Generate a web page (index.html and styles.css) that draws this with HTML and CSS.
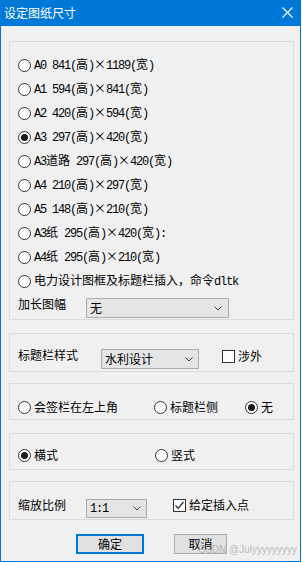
FILE: index.html
```html
<!DOCTYPE html>
<html lang="zh">
<head>
<meta charset="utf-8">
<title>设定图纸尺寸</title>
<link rel="stylesheet" href="styles.css">
</head>
<body>
<div class="win">
  <div class="titlebar">
    <span class="title">设定图纸尺寸</span>
    <svg class="close" width="11" height="11" viewBox="0 0 11 11"><path d="M0.5 0.5 L10.5 10.5 M10.5 0.5 L0.5 10.5" stroke="#fff" stroke-width="1.1" fill="none"/></svg>
  </div>
  <div class="content">
    <div class="group g1">
      <div class="row"><span class="rb"></span><span class="txt"><span class="l">A0 841(</span>高<span class="l">)</span><span class="x">×</span><span class="l">1189(</span>宽<span class="l">)</span></span></div>
      <div class="row"><span class="rb"></span><span class="txt"><span class="l">A1 594(</span>高<span class="l">)</span><span class="x">×</span><span class="l">841(</span>宽<span class="l">)</span></span></div>
      <div class="row"><span class="rb"></span><span class="txt"><span class="l">A2 420(</span>高<span class="l">)</span><span class="x">×</span><span class="l">594(</span>宽<span class="l">)</span></span></div>
      <div class="row"><span class="rb on"></span><span class="txt"><span class="l">A3 297(</span>高<span class="l">)</span><span class="x">×</span><span class="l">420(</span>宽<span class="l">)</span></span></div>
      <div class="row"><span class="rb"></span><span class="txt"><span class="l">A3</span>道路<span class="l"> 297(</span>高<span class="l">)</span><span class="x">×</span><span class="l">420(</span>宽<span class="l">)</span></span></div>
      <div class="row"><span class="rb"></span><span class="txt"><span class="l">A4 210(</span>高<span class="l">)</span><span class="x">×</span><span class="l">297(</span>宽<span class="l">)</span></span></div>
      <div class="row"><span class="rb"></span><span class="txt"><span class="l">A5 148(</span>高<span class="l">)</span><span class="x">×</span><span class="l">210(</span>宽<span class="l">)</span></span></div>
      <div class="row"><span class="rb"></span><span class="txt"><span class="l">A3</span>纸<span class="l"> 295(</span>高<span class="l">)</span><span class="x">×</span><span class="l">420(</span>宽<span class="l">):</span></span></div>
      <div class="row"><span class="rb"></span><span class="txt"><span class="l">A4</span>纸<span class="l"> 295(</span>高<span class="l">)</span><span class="x">×</span><span class="l">210(</span>宽<span class="l">)</span></span></div>
      <div class="row"><span class="rb"></span><span class="txt">电力设计图框及标题栏插入，命令<span class="l">dltk</span></span></div>
      <div class="lenrow">
        <span class="lbl w68">加长图幅</span>
        <div class="combo c-len"><span>无</span><svg class="chev" width="8" height="5" viewBox="0 0 8 5"><path d="M0.5 0.5 L4 4 L7.5 0.5" stroke="#444" fill="none"/></svg></div>
      </div>
    </div>

    <div class="group g2">
      <span class="lbl w83">标题栏样式</span>
      <div class="combo c-style"><span>水利设计</span><svg class="chev" width="8" height="5" viewBox="0 0 8 5"><path d="M0.5 0.5 L4 4 L7.5 0.5" stroke="#444" fill="none"/></svg></div>
      <div class="chk chk-shewai"><span class="cb"></span><span class="txt">涉外</span></div>
    </div>

    <div class="group g3">
      <div class="opt w136"><span class="rb"></span><span class="txt">会签栏在左上角</span></div>
      <div class="opt w91"><span class="rb"></span><span class="txt">标题栏侧</span></div>
      <div class="opt"><span class="rb on"></span><span class="txt">无</span></div>
    </div>

    <div class="group g4">
      <div class="opt w137"><span class="rb on"></span><span class="txt">横式</span></div>
      <div class="opt"><span class="rb"></span><span class="txt">竖式</span></div>
    </div>

    <div class="group g5">
      <span class="lbl w68">缩放比例</span>
      <div class="combo c-scale"><span class="l">1:1</span><svg class="chev" width="8" height="5" viewBox="0 0 8 5"><path d="M0.5 0.5 L4 4 L7.5 0.5" stroke="#444" fill="none"/></svg></div>
      <div class="chk chk-pt"><span class="cb"><svg width="11" height="11" viewBox="0 0 11 11"><path d="M1.5 5.5 L4.2 8.3 L9.5 2" stroke="#222" stroke-width="1.2" fill="none"/></svg></span><span class="txt">给定插入点</span></div>
    </div>

    <div class="buttons">
      <div class="btn ok">确定</div>
      <div class="btn cancel">取消</div>
    </div>
  </div>
  <div class="wm">CSDN @Julyyyyyyyyy</div>
</div>
</body>
</html>
```

FILE: styles.css
```css
html, body {
  margin: 0;
  padding: 0;
  background: #ffffff;
}
body {
  font-family: "Noto Sans CJK SC", "Noto Sans", sans-serif;
  font-size: 12px;
  color: #000;
}
.win {
  position: relative;
  width: 301px;
  height: 562px;
  box-sizing: border-box;
  border: 1px solid #0078d7;
  border-top: 0;
  background: #f0f0f0;
}
.titlebar {
  height: 26px;
  background: #0078d7;
  display: flex;
  align-items: center;
  justify-content: space-between;
  padding: 0 7px 0 3px;
  color: #fff;
}
.title {
  font-size: 12px;
  line-height: 16px;
  margin-top: -1px;
}
.close {
  display: block;
  margin-top: -1px;
}
.content {
  padding-left: 8px;
}
.group {
  width: 285px;
  box-sizing: border-box;
  border: 1px solid #dcdcdc;
  padding-left: 8px;
}
.g1 {
  margin-top: 15px;
  height: 279px;
  padding-top: 11px;
}
.row {
  height: 24px;
  display: flex;
  align-items: center;
}
.rb {
  width: 13px;
  height: 13px;
  box-sizing: border-box;
  border: 1px solid #333;
  border-radius: 50%;
  background: #fff;
  position: relative;
  flex: none;
}
.rb.on::after {
  content: "";
  position: absolute;
  left: 2px;
  top: 2px;
  width: 7px;
  height: 7px;
  border-radius: 50%;
  background: #1a1a1a;
}
.txt {
  margin-left: 3px;
  line-height: 16px;
  white-space: nowrap;
}
.l {
  font-family: "Liberation Mono", monospace;
  font-size: 12px;
  letter-spacing: -1.2px;
}
.x {
  display: inline-block;
  width: 12px;
  text-align: center;
}
.lenrow {
  display: flex;
  align-items: flex-start;
  margin-top: 3px;
}
.lbl {
  line-height: 16px;
  flex: none;
}
.w68 { width: 68px; }
.w83 { width: 83px; }
.w136 { width: 136px; }
.w91 { width: 91px; }
.w137 { width: 137px; }
.combo {
  box-sizing: border-box;
  border: 1px solid #adadad;
  background: #e5e5e5;
  display: flex;
  align-items: center;
  justify-content: space-between;
  padding: 0 5px 0 3px;
  line-height: 16px;
  flex: none;
}
.c-len {
  width: 143px;
  height: 20px;
  margin-top: 2px;
}
.c-len .chev { margin-right: 1px; }
.chev { display: block; }
.g2 {
  margin-top: 13px;
  height: 39px;
  padding-top: 13px;
  display: flex;
  align-items: flex-start;
}
.c-style {
  width: 98px;
  height: 20px;
  margin-top: 2px;
}
.chk {
  display: flex;
  align-items: center;
  height: 16px;
}
.cb {
  width: 13px;
  height: 13px;
  box-sizing: border-box;
  border: 1px solid #333;
  background: #fff;
  flex: none;
  display: flex;
  align-items: center;
  justify-content: center;
}
.cb svg { display: block; }
.chk-shewai {
  margin-left: 23px;
  margin-top: 1px;
}
.g3 {
  margin-top: 11px;
  height: 37px;
  padding-top: 15px;
  display: flex;
}
.opt {
  display: flex;
  align-items: center;
  height: 16px;
  flex: none;
}
.g4 {
  margin-top: 13px;
  height: 37px;
  padding-top: 13px;
  display: flex;
}
.g5 {
  margin-top: 11px;
  height: 39px;
  padding-top: 15px;
  display: flex;
  align-items: flex-start;
}
.c-scale {
  width: 61px;
  height: 19px;
  margin-top: 2px;
}
.chk-pt {
  margin-left: 26px;
}
.buttons {
  display: flex;
  margin-top: 14px;
  padding-left: 67px;
}
.btn {
  height: 20px;
  box-sizing: border-box;
  background: #e1e1e1;
  display: flex;
  align-items: center;
  justify-content: center;
  line-height: 16px;
}
.ok {
  width: 68px;
  border: 2px solid #0078d7;
}
.cancel {
  width: 53px;
  border: 1px solid #adadad;
  margin-left: 30px;
}
.wm {
  position: absolute;
  right: 3px;
  bottom: 5px;
  font-family: "Liberation Sans", sans-serif;
  font-size: 10px;
  line-height: 12px;
  color: rgba(170, 170, 170, 0.75);
  white-space: nowrap;
}
```
